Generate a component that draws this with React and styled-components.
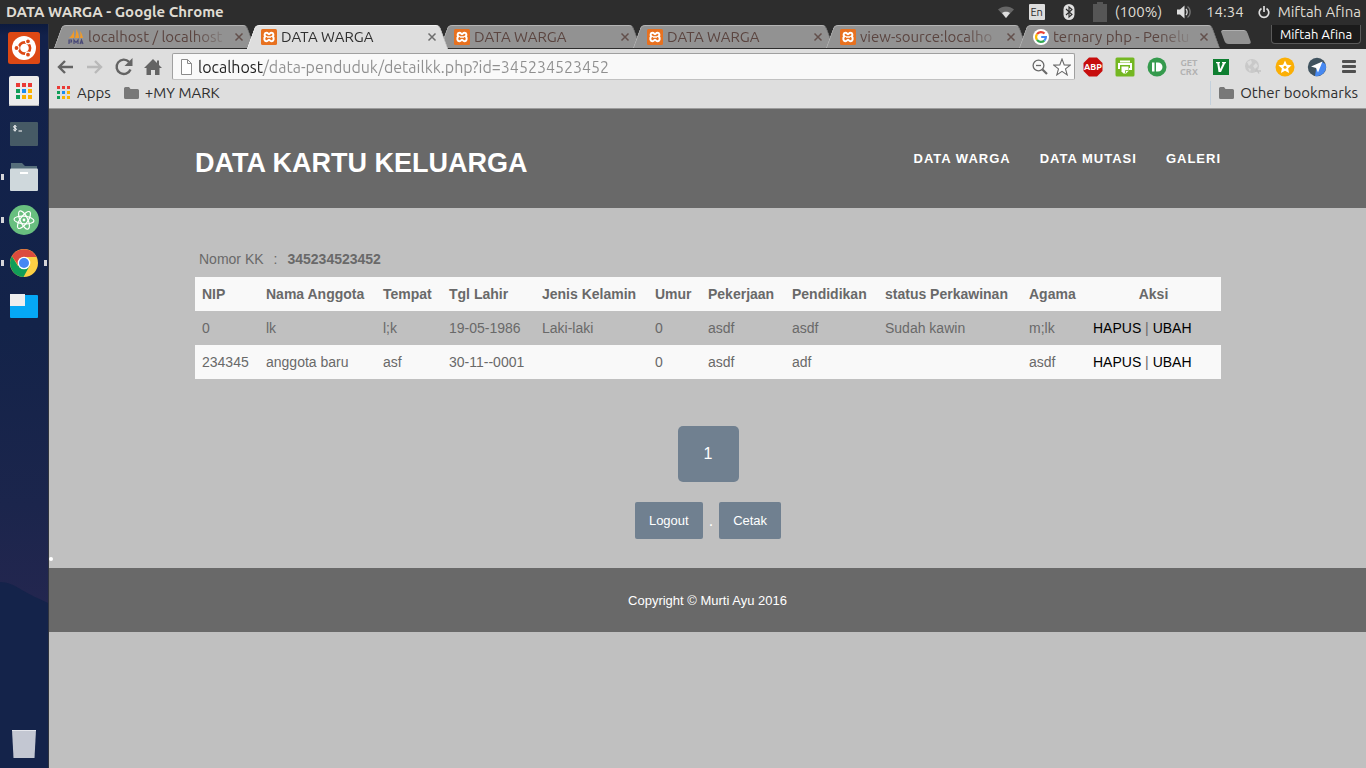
import React from "react";
import styled, { createGlobalStyle, css } from "styled-components";

const uiFont = '"Ubuntu", "Noto Sans", "Open Sans", sans-serif';
const pageFont = '"Liberation Sans", Arial, Helvetica, sans-serif';

const GlobalStyle = createGlobalStyle`
  *, *::before, *::after { box-sizing: border-box; }
  body { margin: 0; font-family: ${uiFont}; background: #c0c0c0; }
  button, input { font: inherit; color: inherit; }
  button { border: 0; padding: 0; background: none; cursor: pointer; }
  a { color: inherit; text-decoration: none; }
`;

const Desktop = styled.div`
  min-height: 100vh;
  display: flex;
  flex-direction: column;
`;

const PanelBar = styled.header`
  height: 24px;
  padding: 0 5px 0 6px;
  display: flex;
  align-items: center;
  justify-content: space-between;
  background: #2d2d2d;
  color: #dfdbd2;
  font-size: 15px;
  line-height: 24px;
  white-space: nowrap;
`;

const WindowTitle = styled.div`
  font-weight: 700;
`;

const Indicators = styled.div`
  display: flex;
  align-items: center;
  svg { display: block; }
`;

const Indicator = styled.div`
  display: flex;
  align-items: center;
  gap: ${(p) => p.$gap || 0}px;
  margin-left: ${(p) => p.$before || 14}px;
`;

const LangBadge = styled.span`
  width: 16px;
  height: 16px;
  border-radius: 1px;
  background: #dddddd;
  color: #2d2d2d;
  font-size: 11px;
  line-height: 16px;
  text-align: center;
`;

const Workspace = styled.div`
  flex: 1;
  display: flex;
`;

const Launcher = styled.nav`
  position: relative;
  isolation: isolate;
  flex: 0 0 49px;
  padding: 2px 0 3px;
  display: flex;
  flex-direction: column;
  border-right: 1px solid #30343f;
  background: linear-gradient(#0c1a3e 0, #12214b 12px, #132349 300px, #1b254c 480px, #23264f 580px);
`;

const Mountain = styled.svg`
  position: absolute;
  z-index: -1;
  left: 0;
  bottom: 0;
  width: 100%;
  height: 188px;
`;

const LauncherButton = styled.button`
  position: relative;
  height: 43px;
  display: flex;
  align-items: center;
  justify-content: center;
  margin-top: ${(p) => (p.$last ? "auto" : "0")};
  svg { display: block; }
  ${(p) => p.$running && css`
    &::before {
      content: "";
      position: absolute;
      left: 1px;
      top: 19px;
      width: 3px;
      height: 6px;
      background: #d5d5d9;
    }
  `}
  ${(p) => p.$focused && css`
    &::after {
      content: "";
      position: absolute;
      right: 1px;
      top: 19px;
      width: 3px;
      height: 6px;
      background: #d5d5d9;
    }
  `}
`;

const Browser = styled.div`
  flex: 1;
  min-width: 0;
  display: flex;
  flex-direction: column;
`;

const TabStrip = styled.div`
  height: 25px;
  padding: 1px 5px 0 9px;
  display: flex;
  align-items: flex-start;
  background: #2d2d2d;
  color: #5b4540;
`;

const tabSide = css`
  content: "";
  position: absolute;
  z-index: -1;
  top: 0;
  bottom: 0;
  width: 55%;
  background: ${(p) => (p.$active ? "#dedede" : "#929292")};
  border-top: 1px solid ${(p) => (p.$active ? "#f2f2f2" : "#b4b4b4")};
`;

const Tab = styled.div`
  position: relative;
  isolation: isolate;
  z-index: ${(p) => (p.$active ? 1 : 0)};
  flex: 0 1 193px;
  min-width: 0;
  height: ${(p) => (p.$active ? 24 : 23)}px;
  padding: 0 7px 0 10px;
  display: flex;
  align-items: center;
  gap: 4px;
  font-size: 15px;
  line-height: 22px;
  color: ${(p) => (p.$active ? "#2f2f2f" : "#5b4540")};
  &::before {
    ${tabSide}
    left: 0;
    border-left: 1px solid ${(p) => (p.$active ? "#f2f2f2" : "#b4b4b4")};
    border-radius: 4px 0 0 0;
    transform: skewX(-20deg);
  }
  &::after {
    ${tabSide}
    right: 0;
    border-right: 1px solid ${(p) => (p.$active ? "#bcbcbc" : "#6e6e6e")};
    border-radius: 0 4px 0 0;
    transform: skewX(20deg);
  }
  svg { display: block; flex: none; }
`;

const TabTitle = styled.span`
  flex: 1;
  min-width: 0;
  overflow: hidden;
  white-space: nowrap;
  mask-image: linear-gradient(to right, #000 calc(100% - 36px), transparent 100%);
`;

const CloseButton = styled.button`
  flex: none;
  width: 10px;
  height: 10px;
  color: ${(p) => (p.$active ? "#6d6d6d" : "#63504c")};
`;

const NewTabButton = styled.button`
  width: 26px;
  height: 14px;
  margin: 5px 0 0 7px;
  border-radius: 3px;
  border-top: 1px solid #b0b0b0;
  background: #929292;
  transform: skewX(20deg);
`;

const ProfileButton = styled.button`
  height: 19px;
  width: 90px;
  margin-left: auto;
  border: 1px solid #5a5a5a;
  border-top: 0;
  border-radius: 0 0 4px 4px;
  background: #1b1b1b;
  color: #ffffff;
  font-size: 13px;
  line-height: 18px;
`;

const Toolbar = styled.div`
  height: 31px;
  padding: 4px 1px 0 2px;
  display: flex;
  align-items: stretch;
  background: #dedede;
`;

const ToolButton = styled.button`
  width: ${(p) => (p.$wide ? 32 : 29)}px;
  display: flex;
  align-items: center;
  justify-content: center;
  color: ${(p) => (p.$faded ? "#b9b9b9" : "#646464")};
  svg { display: block; }
`;

const AddressBar = styled.form`
  flex: 1;
  min-width: 0;
  height: 27px;
  margin: 0 2px 0 5px;
  padding: 0 3px 0 6px;
  display: flex;
  align-items: center;
  gap: 4px;
  border: 1px solid #a0a0a0;
  border-bottom-color: #c2c2c2;
  border-radius: 2px;
  background: #f9f9f9;
  svg { display: block; }
`;

const AddressInput = styled.input`
  flex: 1;
  min-width: 0;
  height: 24px;
  border: 0;
  padding: 0;
  outline: 0;
  font-size: 16px;
  color: transparent;
  background: linear-gradient(to right, #222222 65px, #8f8f8f 65px);
  background-clip: text;
`;

const InlineButton = styled.button`
  width: 18px;
  height: 18px;
  color: #6a6a6a;
`;

const BookmarksBar = styled.nav`
  height: 29px;
  padding: 0 8px 2px;
  display: flex;
  align-items: center;
  gap: 13px;
  background: #dedede;
  border-bottom: 1px solid #9c9c9c;
  color: #2f2f2f;
  font-size: 15px;
  line-height: 24px;
`;

const Bookmark = styled.button`
  display: flex;
  align-items: center;
  gap: 6px;
  margin-left: ${(p) => (p.$right ? "auto" : "0")};
  padding-left: ${(p) => (p.$right ? 8 : 0)}px;
  border-left: ${(p) => (p.$right ? "1px solid #c3d0dc" : "0")};
  svg { display: block; }
`;

const Page = styled.div`
  flex: 1;
  background: #c0c0c0;
  color: #696969;
  font-family: ${pageFont};
  font-size: 14px;
`;

const SiteHeader = styled.header`
  height: 99px;
  padding: 0 145px 0 146px;
  display: flex;
  align-items: center;
  justify-content: space-between;
  background: #696969;
  color: #ffffff;
`;

const SiteTitle = styled.h1`
  margin: 8px 0 0;
  font-size: 27px;
  line-height: 32px;
`;

const SiteNav = styled.nav`
  display: flex;
  gap: 29px;
  font-size: 13px;
  font-weight: 700;
  letter-spacing: 1px;
  line-height: 20px;
`;

const Content = styled.main`
  padding: 33px 145px 0 146px;
`;

const FamilyNumber = styled.dl`
  margin: 0;
  padding-left: 4px;
  height: 36px;
  display: flex;
  gap: 10px;
  line-height: 36px;
  dd { margin: 0; font-weight: 700; }
`;

const MemberTable = styled.table`
  width: 100%;
  table-layout: fixed;
  border-collapse: collapse;
  th, td {
    height: 34px;
    padding: 0 0 0 7px;
    text-align: left;
    line-height: 20px;
    white-space: nowrap;
  }
  th:last-child { padding: 0; text-align: center; }
  tr { background: #f9f9f9; }
  tbody tr:nth-child(odd) { background: #c0c0c0; }
  td a { color: #000000; }
`;

const Pagination = styled.nav`
  margin-top: 47px;
  display: flex;
  justify-content: center;
`;

const PageLink = styled.a`
  width: 61px;
  height: 56px;
  border-radius: 5px;
  background: #708090;
  color: #ffffff;
  font-size: 16px;
  line-height: 55px;
  text-align: center;
`;

const Actions = styled.div`
  margin-top: 20px;
  display: flex;
  justify-content: center;
  align-items: center;
  gap: 6px;
  color: #ffffff;
  font-size: 16px;
`;

const ActionButton = styled.button`
  height: 37px;
  padding: 0 14px;
  border-radius: 2px;
  background: #708090;
  font-size: 13px;
`;

const BulletRow = styled.div`
  height: 29px;
  display: flex;
  align-items: center;
  padding-top: 11px;
  &::before {
    content: "";
    width: 4px;
    height: 4px;
    border-radius: 2px;
    background: #ffffff;
  }
`;

const SiteFooter = styled.footer`
  padding: 23px 0 21px;
  background: #696969;
  color: #ffffff;
  font-size: 13px;
  line-height: 20px;
  text-align: center;
`;

/* ---------- icons ---------- */

const CloseIcon = () => (
  <svg width="10" height="10" viewBox="0 0 10 10" stroke="currentColor" strokeWidth="1.5">
    <path d="M1.500 1.500l7 7M8.500 1.500l-7 7" />
  </svg>
);

const XamppIcon = () => (
  <svg width="16" height="16" viewBox="0 0 16 16">
    <rect width="16" height="16" rx="1.5" fill="#e8711f" />
    <path d="M5.500 3.800c-2 0-2.600 2.600-1 3.600-2 1-1.400 4.800 1 4.800 1.500 0 2-1.500 2.500-1.500s1 1.500 2.500 1.500c2.400 0 3-3.800 1-4.800 1.600-1 1-3.600-1-3.600-1.500 0-2 1.500-2.500 1.500s-1-1.500-2.500-1.500z" fill="none" stroke="#fff" strokeWidth="2" />
    <path d="M6 8h4" stroke="#fff" strokeWidth="1.500" />
  </svg>
);

const PmaIcon = () => (
  <svg width="16" height="16" viewBox="0 0 16 16">
    <path d="M6 1v8H1C3.500 7 5 4.500 6 1zM8 0c2 3 3 6 3 9H7c1-3 1.500-6 1-9zM12 2c1.500 2 2.500 4.500 3 7h-3c.5-2 .5-4.500 0-7z" fill="#f09a28" />
    <path d="M1 15v-4h2.500v2H1M6 15v-4l2 2.500L10 11v4M12 15l1.500-4 1.500 4M12.500 14h2" fill="none" stroke="#4a4a78" strokeWidth="1.200" />
  </svg>
);

const GoogleIcon = () => (
  <svg width="16" height="16" viewBox="0 0 16 16" fill="none" strokeWidth="2.200">
    <circle cx="8" cy="8" r="8" fill="#fff" />
    <path d="M4 5.200A4.900 4.900 0 0 1 11.500 4.600" stroke="#ea4335" />
    <path d="M4 5.200a4.900 4.900 0 0 0 0 5.600" stroke="#fbbc05" />
    <path d="M4 10.800a4.900 4.900 0 0 0 7.300.8" stroke="#34a853" />
    <path d="M11.300 11.600A4.900 4.900 0 0 0 12.900 8H8.200" stroke="#4285f4" />
  </svg>
);

const WifiIcon = () => (
  <svg width="18" height="14" viewBox="0 0 18 14">
    <path d="M1 4.500C5.500.500 12.500.500 17 4.500L9 13z" fill="#666" />
    <path d="M5 8c2.200-1.800 5.800-1.800 8 0L9 13z" fill="#dfdfdf" />
  </svg>
);

const BluetoothIcon = () => (
  <svg width="12" height="16" viewBox="0 0 12 16">
    <rect x=".5" width="11" height="16" rx="5.500" fill="#dfdfdf" />
    <path d="M3 5l6 5.500L6 13V3l3 2.500L3 11" fill="none" stroke="#2d2d2d" strokeWidth="1.100" />
  </svg>
);

const BatteryIcon = () => (
  <svg width="14" height="20" viewBox="0 0 14 20">
    <path d="M4 0h6v2h4v18H0V2h4z" fill="#565656" />
  </svg>
);

const SpeakerIcon = () => (
  <svg width="16" height="16" viewBox="0 0 16 16">
    <path d="M1 5.500h3L8.500 1.500v13L4 10.500H1z" fill="#dfdfdf" />
    <path d="M10 5c1.500 1.500 1.500 4.500 0 6" fill="none" stroke="#dfdfdf" strokeWidth="1.300" />
    <path d="M11.500 2.500c3.500 2.500 3.500 8.500 0 11" fill="none" stroke="#777" strokeWidth="1.300" />
  </svg>
);

const PowerIcon = () => (
  <svg width="12" height="14" viewBox="0 0 12 14" fill="none" stroke="#dfdfdf" strokeWidth="1.700">
    <path d="M3.500 3.500a4.800 4.800 0 1 0 5 0M6 1v6" />
  </svg>
);

const DotsIcon = ({ size, step, dot }) => {
  const colors = ["#ea3a36", "#ea3a36", "#ea3a36", "#0f9d58", "#1a8cf0", "#fbb200", "#0f9d58", "#fbb200", "#fbb200"];
  return (
    <svg width={size} height={size}>
      {colors.map((c, i) => (
        <rect key={i} x={(i % 3) * step} y={Math.floor(i / 3) * step} width={dot} height={dot} fill={c} />
      ))}
    </svg>
  );
};

const FolderIcon = () => (
  <svg width="15" height="14" viewBox="0 0 15 14">
    <path d="M0 2.500Q0 1 1.500 1H5l1.500 2h7Q15 3 15 4.500v7Q15 13 13.500 13h-12Q0 13 0 11.500z" fill="#787878" />
  </svg>
);

const BackIcon = ({ flip }) => (
  <svg width="17" height="16" viewBox="0 0 17 16" fill="none" stroke="currentColor" strokeWidth="2.400">
    {flip ? <path d="M1 8h13M9 2l6 6-6 6" /> : <path d="M16 8H3M8 2L2 8l6 6" />}
  </svg>
);

const ReloadIcon = () => (
  <svg width="20" height="20" viewBox="0 0 20 20">
    <path d="M16.500 12.500A7.200 7.200 0 1 1 15 4.800" fill="none" stroke="currentColor" strokeWidth="2.400" />
    <path d="M18.500 1v8h-8z" fill="currentColor" />
  </svg>
);

const HomeIcon = () => (
  <svg width="18" height="18" viewBox="0 0 18 18">
    <path d="M9 1l4 4V2.500h2V7l3 3h-2.500v7h-4.500v-5H7v5H2.500v-7H0z" fill="currentColor" />
  </svg>
);

const DocIcon = () => (
  <svg width="15" height="18" viewBox="0 0 15 18" fill="#fff" stroke="#8a8a8a">
    <path d="M2.500 1.500h6l4 4v11h-10zM8.500 1.500v4h4" />
  </svg>
);

const ZoomOutIcon = () => (
  <svg width="18" height="18" viewBox="0 0 18 18" fill="none" stroke="currentColor" strokeWidth="1.300">
    <circle cx="7.500" cy="7.500" r="5.400" />
    <path d="M5 7.500h5" />
    <path d="M11.500 11.500l4.500 4.500" strokeWidth="2.200" />
  </svg>
);

const StarIcon = () => (
  <svg width="18" height="18" viewBox="0 0 18 18" fill="#fff" stroke="currentColor" strokeWidth="1.100">
    <path d="M9 1l2.200 5.900 6.100.2-4.800 3.800 1.700 6L9 13.400l-5.200 3.500 1.700-6L.7 7.100l6.100-.2z" />
  </svg>
);

const extText = { fontFamily: uiFont, fontWeight: 700, textAnchor: "middle" };

const AbpIcon = () => (
  <svg width="20" height="20" viewBox="0 0 20 20">
    <path d="M6 .5h8L19.500 6v8L14 19.500H6L.5 14V6z" fill="#c70d0d" />
    <text x="10" y="13" fontSize="9" fill="#fff" {...extText}>ABP</text>
  </svg>
);

const PrintIcon = () => (
  <svg width="20" height="20" viewBox="0 0 20 20">
    <rect x=".5" y=".5" width="19" height="19" rx="1.500" fill="#74b722" />
    <path d="M5 3.500h10v2H5z" fill="#fff" />
    <path d="M4 12V7h12v5h-2" fill="none" stroke="#fff" strokeWidth="2" />
    <path d="M6.500 9.500h7V14L11 16.500H8.500l-2-2z" fill="#fff" />
    <path d="M10.500 16v-2.500h3" fill="none" stroke="#74b722" strokeWidth=".8" />
  </svg>
);

const PushIcon = () => (
  <svg width="20" height="20" viewBox="0 0 20 20">
    <circle cx="10" cy="10" r="9.500" fill="#359a4d" />
    <path d="M5 5.500h2.500v9H5zM9 5.500h2a4.500 4.500 0 0 1 0 9H9z" fill="#fff" />
  </svg>
);

const CrxIcon = () => (
  <svg width="20" height="20" viewBox="0 0 20 20">
    <text x="10" y="9" fontSize="9" fill="#b1b1b1" {...extText}>GET</text>
    <text x="10" y="18" fontSize="9" fill="#b1b1b1" {...extText}>CRX</text>
  </svg>
);

const VimIcon = () => (
  <svg width="16" height="16" viewBox="0 0 16 16">
    <rect width="16" height="16" fill="#0f7f31" />
    <path d="M3 3h4v1.200H6.200L7.200 10l2.700-5.800H9V3h4v1.200h-.8L8 13H5.500L4.200 4.200H3z" fill="#fff" />
  </svg>
);

const GlobeIcon = () => (
  <svg width="18" height="18" viewBox="0 0 18 18">
    <circle cx="8" cy="8" r="7" fill="#c9c9c9" />
    <path d="M3 4l4-2 1 3-3 3zM9 8l3-3 2 3-3 3zM4 10l3 1-1 3z" fill="#dcdcdc" />
    <path d="M11 13h6M12 10.500l3 5" stroke="#c2c2c2" strokeWidth="1.300" />
  </svg>
);

const GoldStarIcon = () => (
  <svg width="20" height="20" viewBox="0 0 20 20">
    <circle cx="10" cy="10" r="9.500" fill="#fbaf05" />
    <path d="M10 3.500l1.900 4.300 4.700.5-3.500 3.200 1 4.600-4.100-2.400-4.100 2.400 1-4.600-3.500-3.200 4.700-.5z" fill="#fff" />
    <circle cx="10" cy="10.300" r="1.500" fill="#fbaf05" />
  </svg>
);

const PlaneIcon = () => (
  <svg width="20" height="20" viewBox="0 0 20 20">
    <circle cx="10" cy="10" r="9.200" fill="#40535f" />
    <path d="M15 5l3.500 2A9.200 9.200 0 0 1 8 19l1-6z" fill="#4688f1" />
    <path d="M15.500 4.500L11 15.500l-2-4.500-5-1.500z" fill="#fff" />
  </svg>
);

const MenuIcon = () => (
  <svg width="14" height="14" viewBox="0 0 14 14" fill="#4f4f4f">
    <rect x="0" y="0" width="14" height="3" rx="1" />
    <rect x="0" y="5" width="14" height="3" rx="1" />
    <rect x="0" y="10" width="14" height="3" rx="1" />
  </svg>
);

const UbuntuIcon = () => (
  <svg width="32" height="32" viewBox="0 0 32 32">
    <rect width="32" height="32" rx="2.500" fill="#dd4814" />
    <circle cx="16" cy="16" r="12" fill="#fff" />
    <circle cx="16.500" cy="16" r="5.600" fill="none" stroke="#dd4814" strokeWidth="2.600" />
    <g fill="#dd4814" stroke="#fff" strokeWidth="1.200">
      <circle cx="8.500" cy="16" r="2.500" />
      <circle cx="20" cy="9.300" r="2.500" />
      <circle cx="20" cy="22.700" r="2.500" />
    </g>
  </svg>
);

const AppsIcon = () => (
  <svg width="30" height="30" viewBox="0 0 30 30">
    <rect width="30" height="30" rx="2" fill="#ececec" />
    <rect y="29" width="30" height="1" fill="#b5b5b5" />
    <g fill="#ea3a36"><path d="M7 7h4v4H7zM13 7h4v4h-4zM19 7h4v4h-4z" /></g>
    <g fill="#0f9d58"><path d="M7 13h4v4H7zM7 19h4v4H7z" /></g>
    <path d="M13 13h4v4h-4z" fill="#1a8cf0" />
    <g fill="#fbb200"><path d="M19 13h4v4h-4zM13 19h4v4h-4zM19 19h4v4h-4z" /></g>
  </svg>
);

const TerminalIcon = () => (
  <svg width="28" height="24" viewBox="0 0 28 24">
    <rect width="28" height="24" rx="1" fill="#465a65" />
    <path d="M6.500 4.500C5 3.500 3.500 4 3.500 5s3 1 3 2.200S4.500 8.700 3.200 7.700M5 3v6.500M8.500 9H12" fill="none" stroke="#fff" strokeWidth="1" />
  </svg>
);

const FilesIcon = () => (
  <svg width="28" height="28" viewBox="0 0 28 28">
    <path d="M1 0h11l3 3h12v6H1z" fill="#566e7b" />
    <rect y="5.500" width="28" height="22.500" rx="1" fill="#cfd8dc" />
    <path d="M10 10h8" stroke="#fff" strokeWidth="2" />
  </svg>
);

const AtomIcon = () => (
  <svg width="30" height="30" viewBox="0 0 30 30">
    <circle cx="15" cy="15" r="15" fill="#68bf7f" />
    <g fill="none" stroke="#fff" strokeWidth="1.200">
      <ellipse cx="15" cy="15" rx="10" ry="3.800" transform="rotate(5 15 15)" />
      <ellipse cx="15" cy="15" rx="10" ry="3.800" transform="rotate(65 15 15)" />
      <ellipse cx="15" cy="15" rx="10" ry="3.800" transform="rotate(125 15 15)" />
    </g>
    <circle cx="15" cy="15" r="1.400" fill="#fff" />
  </svg>
);

const ChromeIcon = () => (
  <svg width="28" height="28" viewBox="0 0 28 28">
    <circle cx="14" cy="14" r="14" fill="#fdd044" />
    <path d="M1.900 7A14 14 0 0 0 13.500 28l6-11L14 14 8 17z" fill="#119d58" />
    <path d="M1.900 7l6.900 10L14 8h12.500A14 14 0 0 0 1.900 7z" fill="#dc4b3e" />
    <circle cx="14" cy="14" r="6.300" fill="#fff" />
    <circle cx="14" cy="14" r="5" fill="#4587f3" />
  </svg>
);

const WindowsIcon = () => (
  <svg width="28" height="24" viewBox="0 0 28 24">
    <rect y="1" width="28" height="23" rx="1" fill="#05a8f5" />
    <rect width="15" height="12" fill="#eeeeee" />
  </svg>
);

const TrashIcon = () => (
  <svg width="26" height="30" viewBox="0 0 26 30">
    <path d="M1 1h24l-1.500 28h-21z" fill="#c3c7d2" />
    <path d="M1 1.500h24" stroke="#e4e6ec" />
  </svg>
);

/* ---------- data ---------- */

const launcherItems = [
  { label: "Dash", Icon: UbuntuIcon },
  { label: "App launcher", Icon: AppsIcon },
  { label: "Terminal", Icon: TerminalIcon },
  { label: "Files", Icon: FilesIcon, running: true },
  { label: "Atom", Icon: AtomIcon, running: true },
  { label: "Chrome", Icon: ChromeIcon, running: true, focused: true },
  { label: "Workspaces", Icon: WindowsIcon },
];

const tabs = [
  { title: "localhost / localhost", Icon: PmaIcon },
  { title: "DATA WARGA", Icon: XamppIcon, active: true },
  { title: "DATA WARGA", Icon: XamppIcon },
  { title: "DATA WARGA", Icon: XamppIcon },
  { title: "view-source:localho", Icon: XamppIcon },
  { title: "ternary php - Penelu", Icon: GoogleIcon },
];

const extensions = [
  ["AdBlock Plus", AbpIcon],
  ["Print", PrintIcon],
  ["Pushbullet", PushIcon],
  ["Get CRX", CrxIcon],
  ["Vim", VimIcon],
  ["Web proxy", GlobeIcon],
  ["Favourites", GoldStarIcon],
  ["Send", PlaneIcon],
  ["Menu", MenuIcon],
];

const columns = [
  ["NIP", 64],
  ["Nama Anggota", 117],
  ["Tempat", 66],
  ["Tgl Lahir", 93],
  ["Jenis Kelamin", 113],
  ["Umur", 53],
  ["Pekerjaan", 84],
  ["Pendidikan", 93],
  ["status Perkawinan", 144],
  ["Agama", 64],
  ["Aksi", 135],
];

const members = [
  ["0", "lk", "l;k", "19-05-1986", "Laki-laki", "0", "asdf", "asdf", "Sudah kawin", "m;lk"],
  ["234345", "anggota baru", "asf", "30-11--0001", "", "0", "asdf", "adf", "", "asdf"],
];

export default function App() {
  return (
    <Desktop>
      <GlobalStyle />
      <PanelBar>
        <WindowTitle>DATA WARGA - Google Chrome</WindowTitle>
        <Indicators>
          <Indicator><WifiIcon /></Indicator>
          <Indicator><LangBadge>En</LangBadge></Indicator>
          <Indicator $before={18}><BluetoothIcon /></Indicator>
          <Indicator $before={18} $gap={8}><BatteryIcon /><span>(100%)</span></Indicator>
          <Indicator><SpeakerIcon /></Indicator>
          <Indicator><span>14:34</span></Indicator>
          <Indicator $gap={8}><PowerIcon /><span>Miftah Afina</span></Indicator>
        </Indicators>
      </PanelBar>

      <Workspace>
        <Launcher aria-label="Launcher">
          <Mountain viewBox="0 0 48 188" preserveAspectRatio="none" aria-hidden="true">
            <path d="M0 2c8 0 14 3 22 8s18 9 26 13v165H0z" fill="#14234a" />
          </Mountain>
          {launcherItems.map(({ label, Icon, running, focused }) => (
            <LauncherButton key={label} aria-label={label} $running={running} $focused={focused}>
              <Icon />
            </LauncherButton>
          ))}
          <LauncherButton aria-label="Trash" $last><TrashIcon /></LauncherButton>
        </Launcher>

        <Browser>
          <TabStrip>
            {tabs.map(({ title, Icon, active }, i) => (
              <Tab key={i} $active={active}>
                <Icon />
                <TabTitle>{title}</TabTitle>
                <CloseButton aria-label="Close tab" $active={active}><CloseIcon /></CloseButton>
              </Tab>
            ))}
            <NewTabButton aria-label="New tab" />
            <ProfileButton>Miftah Afina</ProfileButton>
          </TabStrip>

          <Toolbar>
            <ToolButton aria-label="Back"><BackIcon /></ToolButton>
            <ToolButton aria-label="Forward" $faded><BackIcon flip /></ToolButton>
            <ToolButton aria-label="Reload"><ReloadIcon /></ToolButton>
            <ToolButton aria-label="Home"><HomeIcon /></ToolButton>
            <AddressBar onSubmit={(e) => e.preventDefault()}>
              <DocIcon />
              <AddressInput aria-label="Address" defaultValue="localhost/data-penduduk/detailkk.php?id=345234523452" />
              <InlineButton type="button" aria-label="Zoom"><ZoomOutIcon /></InlineButton>
              <InlineButton type="button" aria-label="Bookmark this page"><StarIcon /></InlineButton>
            </AddressBar>
            {extensions.map(([label, Icon]) => (
              <ToolButton key={label} aria-label={label} $wide><Icon /></ToolButton>
            ))}
          </Toolbar>

          <BookmarksBar aria-label="Bookmarks">
            <Bookmark><DotsIcon size={14} step={5} dot={3} />Apps</Bookmark>
            <Bookmark><FolderIcon />+MY MARK</Bookmark>
            <Bookmark $right><FolderIcon />Other bookmarks</Bookmark>
          </BookmarksBar>

          <Page>
            <SiteHeader>
              <SiteTitle>DATA KARTU KELUARGA</SiteTitle>
              <SiteNav>
                <a href="#warga">DATA WARGA</a>
                <a href="#mutasi">DATA MUTASI</a>
                <a href="#galeri">GALERI</a>
              </SiteNav>
            </SiteHeader>

            <Content>
              <FamilyNumber>
                <dt>Nomor KK</dt>
                <span>:</span>
                <dd>345234523452</dd>
              </FamilyNumber>
              <MemberTable>
                <colgroup>
                  {columns.map(([name, width]) => <col key={name} width={width} />)}
                </colgroup>
                <thead>
                  <tr>{columns.map(([name]) => <th key={name} scope="col">{name}</th>)}</tr>
                </thead>
                <tbody>
                  {members.map((row) => (
                    <tr key={row[0]}>
                      {row.map((cell, i) => <td key={i}>{cell}</td>)}
                      <td><a href="#hapus">HAPUS</a> | <a href="#ubah">UBAH</a></td>
                    </tr>
                  ))}
                </tbody>
              </MemberTable>
              <Pagination aria-label="Pages">
                <PageLink href="#1">1</PageLink>
              </Pagination>
              <Actions>
                <ActionButton>Logout</ActionButton>
                <span>.</span>
                <ActionButton>Cetak</ActionButton>
              </Actions>
            </Content>
            <BulletRow />
            <SiteFooter>Copyright © Murti Ayu 2016</SiteFooter>
          </Page>
        </Browser>
      </Workspace>
    </Desktop>
  );
}
